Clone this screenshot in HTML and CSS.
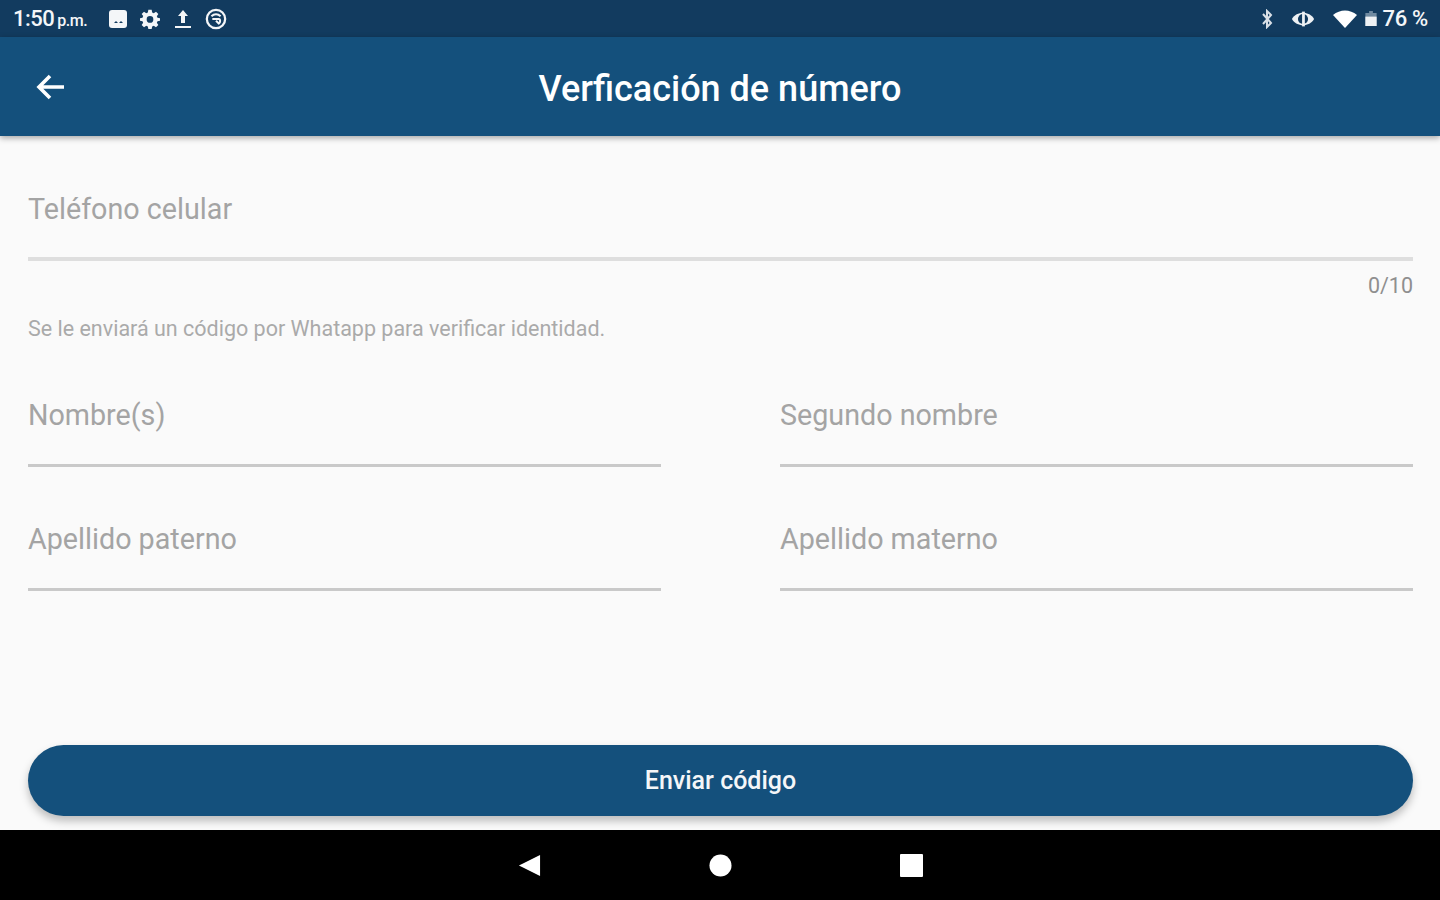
FILE: index.html
```html
<!DOCTYPE html>
<html lang="es">
<head>
  <meta charset="UTF-8">
  <meta name="viewport" content="width=device-width, initial-scale=1.0">
  <title>Verficación de número</title>
  <link rel="stylesheet" href="styles.css">
</head>
<body>
  <div class="screen">
    <div class="status-bar">
      <div class="status-group">
        <span class="clock">1:50<small>p.m.</small></span>
        <svg class="status-icon icon-photo" viewBox="0 0 20 20"><rect x="1" y="1" width="18" height="18" rx="3" fill="#f4f6f8"/><path d="M6 14l2-2 2 2zM11 14l2-2 2 2z" fill="#123b5f"/></svg>
        <svg class="status-icon icon-gear" viewBox="0 0 24 24"><path fill="#f4f6f8" fill-rule="evenodd" d="M10 1h4l.6 3.2 1.9.8L19.200 3.200l2.800 2.800-1.800 2.700.8 1.900L24 11v3l-3 .6-.8 1.900 1.800 2.700-2.800 2.800-2.700-1.800-1.900.8L14 24h-4l-.6-3-1.900-.8-2.700 1.800L2 19.200l1.800-2.700-.8-1.900L0 14v-3l3-.6.8-1.900L2 6l2.800-2.800 2.700 1.800 1.900-.8zM12 8.500a4 4 0 1 0 0 8 4 4 0 0 0 0-8z"/></svg>
        <svg class="status-icon icon-upload" viewBox="0 0 18 20"><path d="M9 1l5 6h-3v7H7V7H4zM1 17h16v2H1z" fill="#f4f6f8"/></svg>
        <svg class="status-icon icon-sync" viewBox="0 0 24 24"><circle cx="12" cy="12" r="10" fill="none" stroke="#f4f6f8" stroke-width="2.500"/><path d="M7 9c3-3 7-3 10 0M8 12h7c2 0 2 4 0 5l-3-3" fill="none" stroke="#f4f6f8" stroke-width="2.200"/></svg>
      </div>
      <div class="status-group status-right">
        <svg class="status-icon icon-bt" viewBox="0 0 12 20"><path d="M2 5l8 9-4 4V2l4 4-8 9" fill="none" stroke="#d8dfe6" stroke-width="2"/></svg>
        <svg class="status-icon icon-eye" viewBox="0 0 26 18"><path d="M1 9c5-9 19-9 24 0-5 9-19 9-24 0z" fill="#eef1f4"/><circle cx="13" cy="9" r="5.500" fill="#123b5f"/><rect x="12" y="1" width="3" height="16" fill="#eef1f4"/></svg>
        <svg class="status-icon icon-wifi" viewBox="0 0 24 18"><path d="M0 5c7-6 17-6 24 0L12 18z" fill="#fff"/></svg>
        <svg class="status-icon icon-battery" viewBox="0 0 12 16"><path d="M4 0h4v2h4v14H0V2h4z" fill="#6f8aa1"/><rect y="6" width="12" height="10" fill="#eef1f4"/></svg>
        <span class="battery-text">76 %</span>
      </div>
    </div>

    <header class="app-bar">
      <svg class="back-icon" viewBox="0 0 32 28"><path d="M29 14H4M15 3L4 14l11 11" fill="none" stroke="#fff" stroke-width="3.600"/></svg>
      <h1>Verficación de número</h1>
    </header>

    <main class="content">
      <div class="form-area">
        <div class="field field-phone">Teléfono celular</div>
        <div class="counter">0/10</div>
        <p class="hint">Se le enviará un código por Whatapp para verificar identidad.</p>
        <div class="field-grid">
          <div class="field">Nombre(s)</div>
          <div class="field">Segundo nombre</div>
          <div class="field">Apellido paterno</div>
          <div class="field">Apellido materno</div>
        </div>
      </div>
      <button class="send-btn" type="button">Enviar código</button>
    </main>

    <nav class="nav-bar">
      <svg class="nav-icon" viewBox="0 0 24 24"><path d="M23 1v22L1 12z" fill="#fff"/></svg>
      <svg class="nav-icon" viewBox="0 0 24 24"><circle cx="12" cy="12" r="11.500" fill="#fff"/></svg>
      <svg class="nav-icon" viewBox="0 0 24 24"><rect width="24" height="24" rx="1" fill="#fff"/></svg>
    </nav>
  </div>
</body>
</html>
```

FILE: styles.css
```css
* {
  box-sizing: border-box;
}
body {
  margin: 0;
  font-family: Roboto, "Liberation Sans", sans-serif;
  background: #fafafa;
}
.screen {
  display: flex;
  flex-direction: column;
  height: 900px;
  overflow: hidden;
}
.status-bar {
  display: flex;
  justify-content: space-between;
  align-items: center;
  flex: 0 0 37px;
  padding: 0 12px 0 13px;
  background: #123b5f;
  color: #f4f6f8;
}
.status-group {
  display: flex;
  align-items: center;
}
.clock {
  width: 95px;
  font-size: 22px;
  font-weight: 500;
  letter-spacing: -0.5px;
}
.clock small {
  margin-left: 3px;
  font-size: 16px;
}
.status-icon {
  display: block;
}
.icon-photo {
  width: 20px;
  height: 20px;
}
.icon-gear {
  width: 20px;
  height: 20px;
  margin-left: 12px;
}
.icon-upload {
  width: 18px;
  height: 20px;
  margin-left: 14px;
}
.icon-sync {
  width: 22px;
  height: 22px;
  margin-left: 13px;
}
.icon-bt {
  width: 12px;
  height: 20px;
}
.icon-eye {
  width: 24px;
  height: 18px;
  margin-left: 18px;
}
.icon-wifi {
  width: 24px;
  height: 18px;
  margin-left: 18px;
}
.icon-battery {
  width: 12px;
  height: 15px;
  margin-left: 8px;
}
.battery-text {
  margin-left: 6px;
  font-size: 22px;
  font-weight: 500;
  letter-spacing: -0.3px;
}
.app-bar {
  position: relative;
  z-index: 1;
  display: flex;
  align-items: center;
  justify-content: center;
  flex: 0 0 99px;
  background: #14507c;
  box-shadow: 0 2px 6px rgba(0, 0, 0, 0.35);
}
.back-icon {
  position: absolute;
  left: 35px;
  top: 36px;
  width: 32px;
  height: 28px;
}
.app-bar h1 {
  margin: 4px 0 0;
  font-size: 36px;
  font-weight: 500;
  color: #fff;
}
.content {
  display: flex;
  flex: 1;
  flex-direction: column;
  justify-content: space-between;
  padding: 0 27px 14px 28px;
  background: #fafafa;
}
.field {
  height: 88px;
  padding-top: 16px;
  border-bottom: 3px solid #c9c9c9;
  font-size: 28.7px;
  line-height: 40px;
  color: #a4a4a4;
}
.field-phone {
  height: 125px;
  padding-top: 53px;
  border-bottom: 4px solid #dedede;
}
.counter {
  margin-top: 13px;
  font-size: 21.5px;
  line-height: 24px;
  text-align: right;
  color: #8f8f8f;
}
.hint {
  margin: 19px 0 0;
  font-size: 21.5px;
  line-height: 24px;
  color: #aaa;
}
.field-grid {
  display: grid;
  grid-template-columns: 633px 633px;
  column-gap: 119px;
  row-gap: 36px;
  margin-top: 38px;
}
.send-btn {
  height: 71px;
  border: none;
  border-radius: 36px;
  background: #14507c;
  box-shadow: 0 5px 8px rgba(0, 0, 0, 0.25);
  font-family: inherit;
  font-size: 25px;
  font-weight: 500;
  color: #f4f6f8;
}
.nav-bar {
  display: flex;
  align-items: center;
  justify-content: center;
  gap: 168px;
  flex: 0 0 70px;
  background: #000;
}
.nav-icon {
  width: 23px;
  height: 23px;
}
```
